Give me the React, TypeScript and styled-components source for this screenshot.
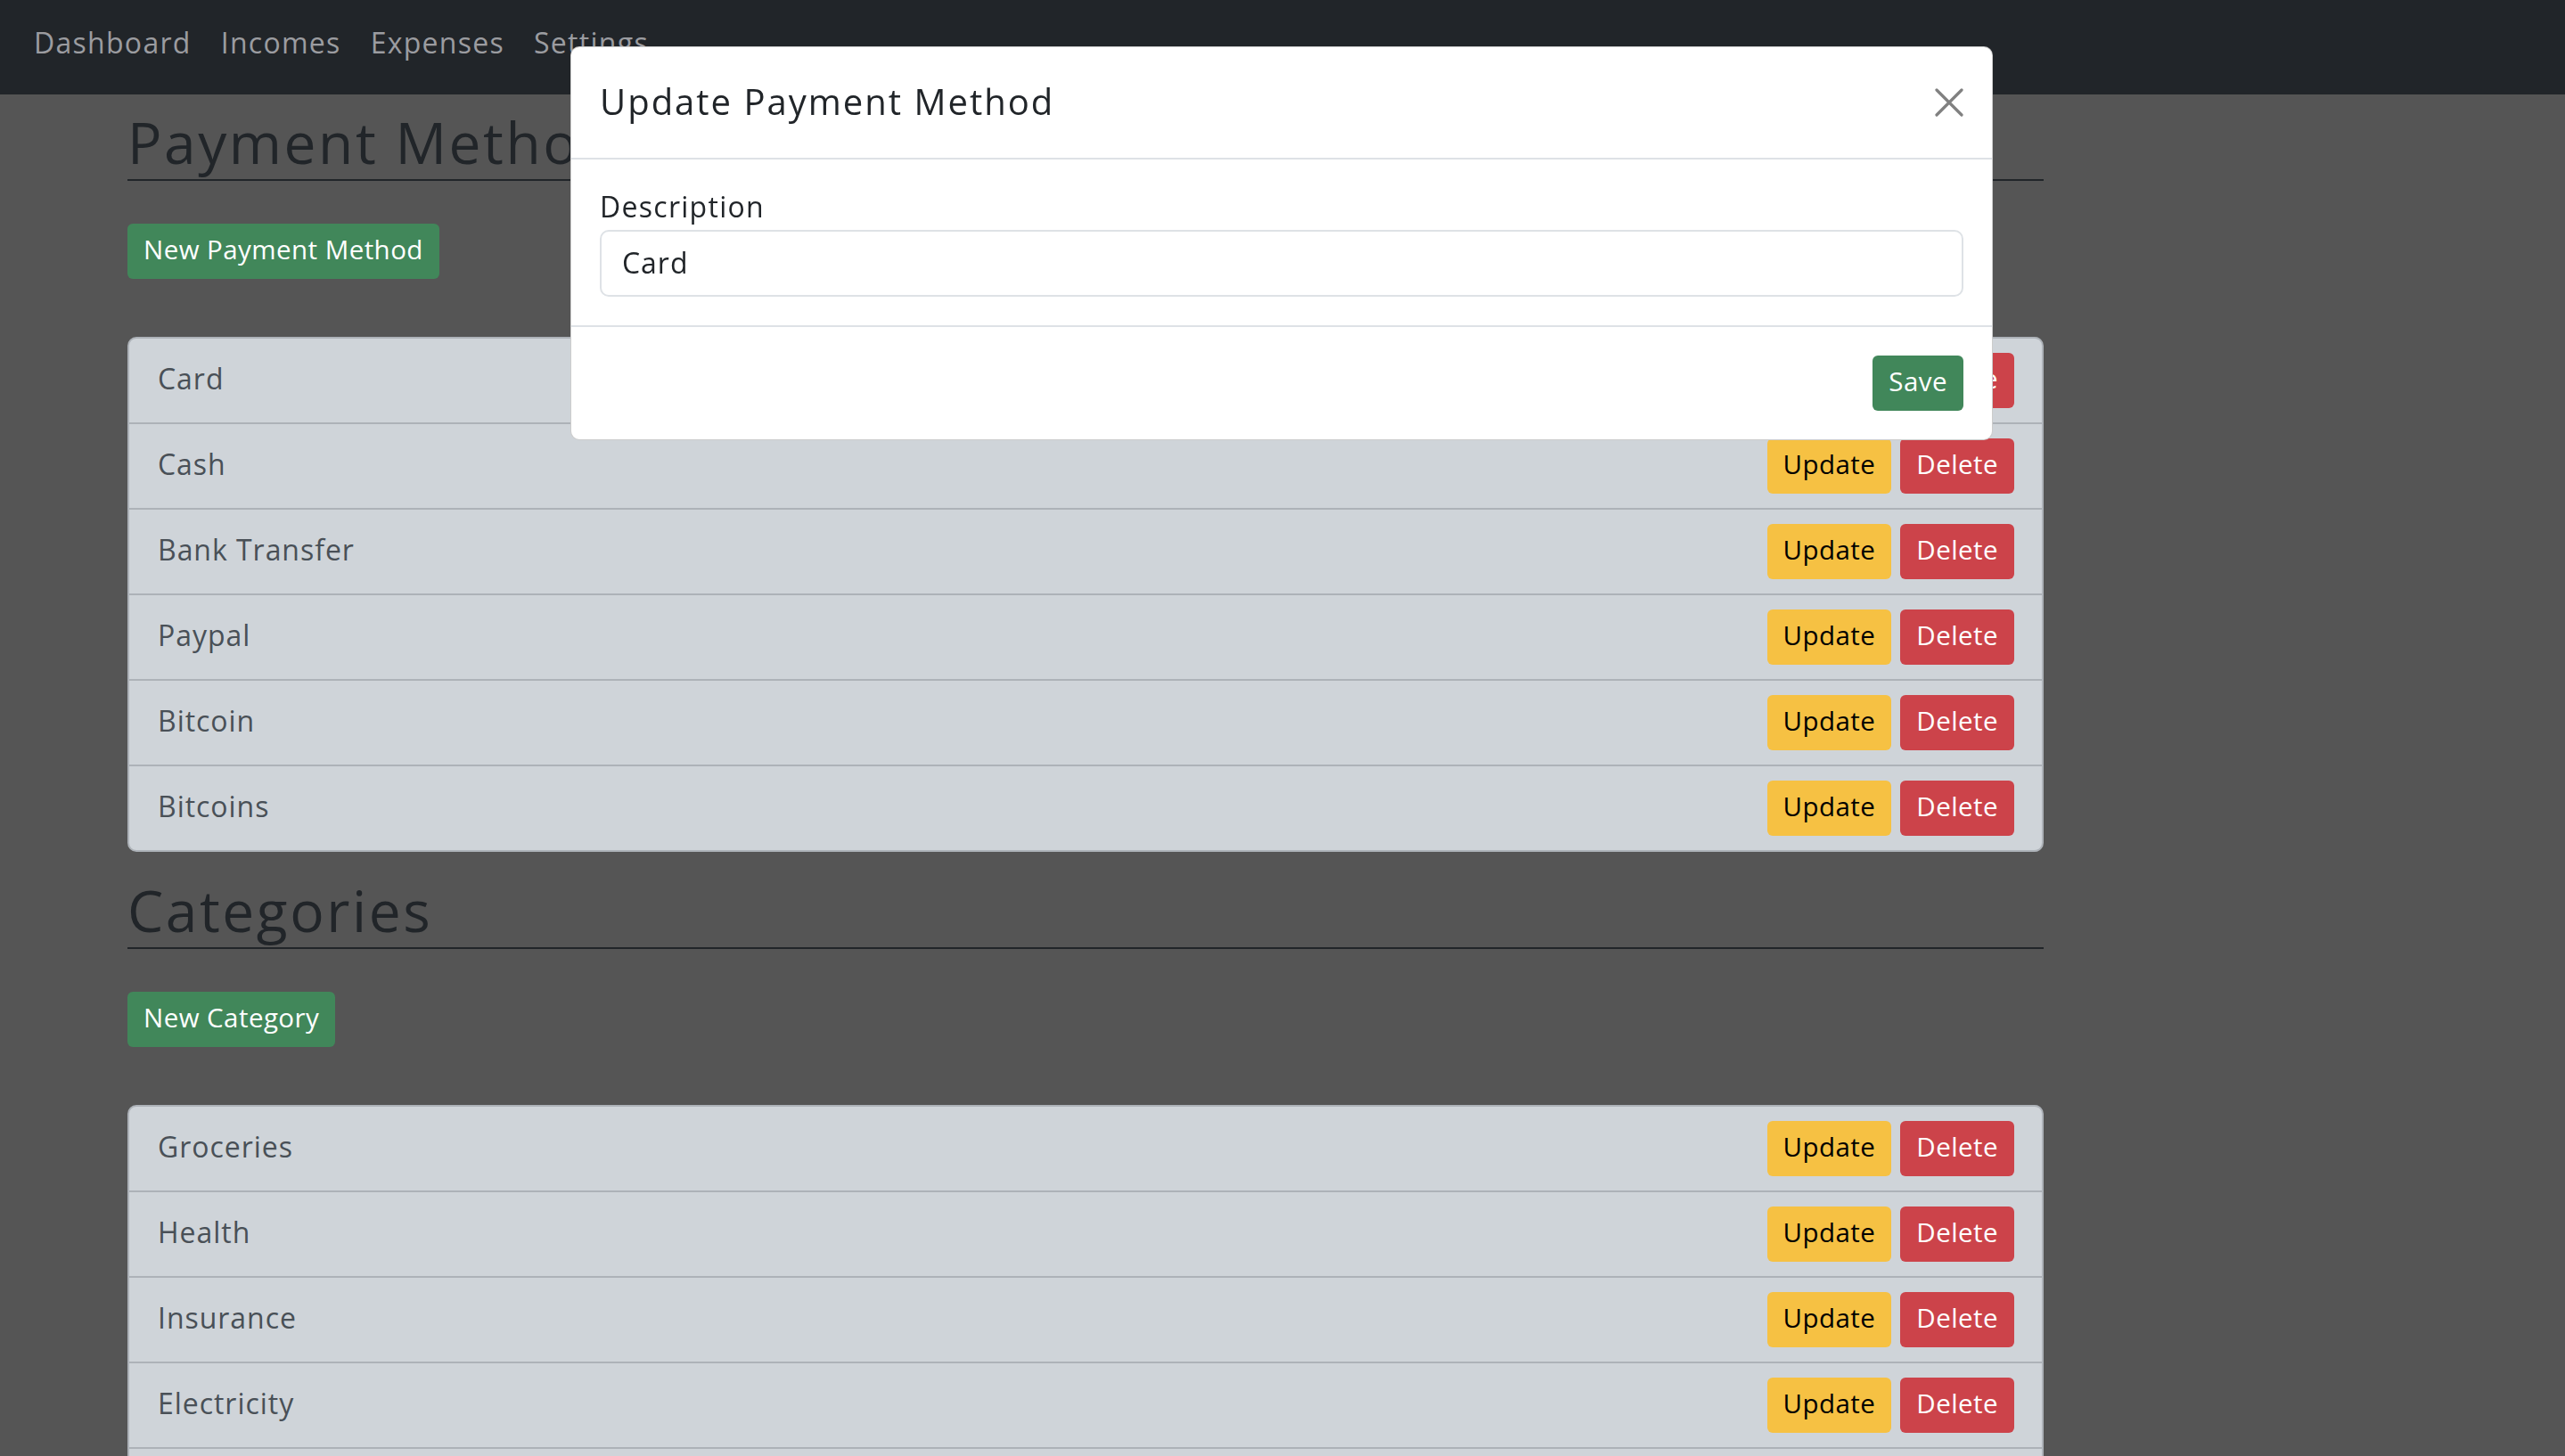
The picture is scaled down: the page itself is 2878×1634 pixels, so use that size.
import React from "react";
import styled, { createGlobalStyle, css } from "styled-components";

const GlobalStyle = createGlobalStyle`
  html, body {
    margin: 0;
    padding: 0;
    background: #555555;
    font-family: "Open Sans", "Liberation Sans", sans-serif;
  }
  * { box-sizing: border-box; }
`;

const Navbar = styled.nav`
  height: 106px;
  background: #212529;
  display: flex;
  align-items: flex-start;
  gap: 33px;
  padding: 25px 38px 0;
`;

const NavLink = styled.a`
  color: #9b9ca0;
  font-size: 32px;
  line-height: 45px;
  letter-spacing: 0.04em;
  text-decoration: none;
`;

const Container = styled.main`
  margin-left: 143px;
  width: 2150px;
  padding-top: 14px;
  padding-bottom: 200px;
`;

const SectionTitle = styled.h2<{ $first?: boolean }>`
  margin: ${(p) => (p.$first ? "0" : "26px")} 0 0;
  font-size: 64px;
  line-height: 79px;
  font-weight: 400;
  letter-spacing: 0.04em;
  color: #212529;
  padding-bottom: 2px;
  border-bottom: 2px solid #212529;
`;

type Variant = "success" | "warning" | "danger";

const variants = {
  success: css`
    background: #41875a;
    color: #ffffff;
  `,
  warning: css`
    background: #f6c143;
    color: #000000;
  `,
  danger: css`
    background: #cc434a;
    color: #ffffff;
  `,
};

const Button = styled.button<{ $variant: Variant }>`
  display: inline-flex;
  align-items: center;
  height: 62px;
  padding: 0 18px 4px;
  border: none;
  border-radius: 6px;
  font-family: inherit;
  font-size: 29.5px;
  line-height: 44px;
  letter-spacing: 0.015em;
  cursor: pointer;
  ${(p) => variants[p.$variant]}
`;

const AddRow = styled.div`
  margin-top: 48px;
  display: flex;
`;

const List = styled.ul`
  list-style: none;
  margin: 65px 0 0;
  padding: 0;
  background: #cfd4d9;
  border: 2px solid #adb2b8;
  border-radius: 10px;
  overflow: hidden;
`;

const Row = styled.li`
  height: 94px;
  display: flex;
  align-items: center;
  justify-content: space-between;
  padding: 0 31px 0 32px;
  & + & {
    border-top: 2px solid #adb2b8;
    height: 96px;
  }
`;

const RowLabel = styled.span`
  font-size: 32px;
  letter-spacing: 0.03em;
  color: #495057;
  padding-bottom: 6px;
`;

const Actions = styled.div`
  display: flex;
  gap: 10px;
`;

const Modal = styled.div`
  position: fixed;
  top: 52px;
  left: 640px;
  width: 1596px;
  background: #ffffff;
  border: 1px solid rgba(0, 0, 0, 0.2);
  border-radius: 10px;
  z-index: 10;
`;

const ModalHeader = styled.div`
  display: flex;
  align-items: center;
  justify-content: space-between;
  padding: 32px;
  border-bottom: 2px solid #dee2e6;
`;

const ModalTitle = styled.h5`
  margin: 0;
  font-size: 40px;
  line-height: 58px;
  font-weight: 400;
  letter-spacing: 0.05em;
  color: #212529;
  padding-bottom: 2px;
`;

const CloseButton = styled.button`
  width: 32px;
  height: 32px;
  padding: 0;
  border: none;
  background: transparent;
  display: flex;
  cursor: pointer;
`;

const ModalBody = styled.div`
  padding: 32px;
  border-bottom: 2px solid #dee2e6;
`;

const Label = styled.label`
  display: block;
  font-size: 32px;
  line-height: 41px;
  letter-spacing: 0.04em;
  color: #212529;
  margin-bottom: 6px;
`;

const Input = styled.input`
  display: block;
  width: 100%;
  height: 75px;
  border: 2px solid #dee2e6;
  border-radius: 10px;
  padding: 0 23px 3px;
  font-family: inherit;
  font-size: 32px;
  letter-spacing: 0.03em;
  color: #212529;
  background: #ffffff;
  outline: none;
`;

const ModalFooter = styled.div`
  display: flex;
  justify-content: flex-end;
  padding: 32px;
`;

const paymentMethods = ["Card", "Cash", "Bank Transfer", "Paypal", "Bitcoin", "Bitcoins"];
const categories = ["Groceries", "Health", "Insurance", "Electricity", "Rent", "Transport"];

const ItemList: React.FC<{ items: string[] }> = ({ items }) => (
  <List>
    {items.map((item) => (
      <Row key={item}>
        <RowLabel>{item}</RowLabel>
        <Actions>
          <Button $variant="warning">Update</Button>
          <Button $variant="danger">Delete</Button>
        </Actions>
      </Row>
    ))}
  </List>
);

export default function App() {
  return (
    <>
      <GlobalStyle />
      <Navbar>
        <NavLink href="#">Dashboard</NavLink>
        <NavLink href="#">Incomes</NavLink>
        <NavLink href="#">Expenses</NavLink>
        <NavLink href="#">Settings</NavLink>
      </Navbar>
      <Container>
        <SectionTitle $first>Payment Methods</SectionTitle>
        <AddRow>
          <Button $variant="success">New Payment Method</Button>
        </AddRow>
        <ItemList items={paymentMethods} />
        <SectionTitle>Categories</SectionTitle>
        <AddRow>
          <Button $variant="success">New Category</Button>
        </AddRow>
        <ItemList items={categories} />
      </Container>
      <Modal role="dialog">
        <ModalHeader>
          <ModalTitle>Update Payment Method</ModalTitle>
          <CloseButton aria-label="Close">
            <svg width="32" height="32" viewBox="0 0 32 32">
              <path d="M2 2 L30 30 M30 2 L2 30" stroke="#808080" strokeWidth="3.2" strokeLinecap="round" />
            </svg>
          </CloseButton>
        </ModalHeader>
        <ModalBody>
          <Label htmlFor="desc">Description</Label>
          <Input id="desc" defaultValue="Card" />
        </ModalBody>
        <ModalFooter>
          <Button $variant="success">Save</Button>
        </ModalFooter>
      </Modal>
    </>
  );
}
